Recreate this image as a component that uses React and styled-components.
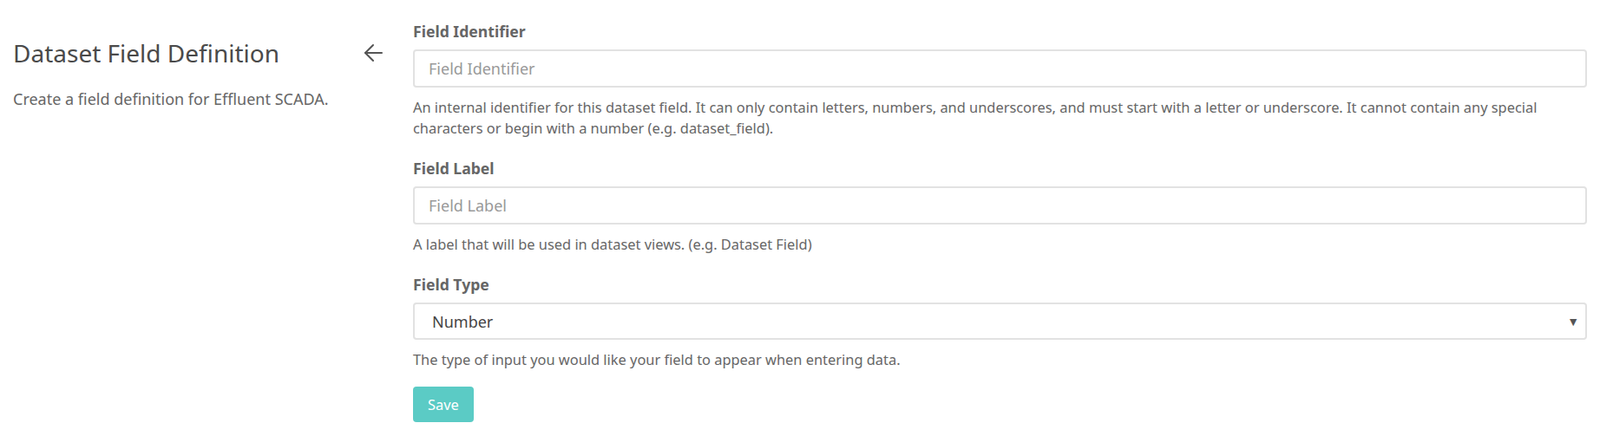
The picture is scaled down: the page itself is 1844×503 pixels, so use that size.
import React from "react";
import styled, { createGlobalStyle } from "styled-components";

const GlobalStyle = createGlobalStyle`
  html, body { margin: 0; padding: 0; background: #ffffff; }
  body { font-family: "Noto Sans", "Open Sans", sans-serif; color: #555; }
  * { box-sizing: border-box; }
`;

const Page = styled.div`
  display: flex;
  align-items: flex-start;
  padding: 24px 15px 0 15px;
  width: 1844px;
`;

const Sidebar = styled.aside`
  width: 426px;
  flex: 0 0 426px;
  padding-top: 19px;
`;

const SidebarHead = styled.div`
  display: flex;
  justify-content: space-between;
  align-items: center;
`;

const Title = styled.h1`
  margin: 0;
  font-size: 28px;
  line-height: 36px;
  font-weight: 400;
  color: #4a4a4a;
`;

const BackButton = styled.button`
  display: flex;
  align-items: center;
  justify-content: center;
  width: 22px;
  height: 22px;
  padding: 0;
  border: none;
  background: none;
  color: #555;
  cursor: pointer;
`;

const Subtitle = styled.p`
  margin: 23px 0 0 0;
  font-size: 18px;
  line-height: 24px;
  color: #666;
`;

const Form = styled.form`
  flex: 1;
  margin-left: 35px;
  display: flex;
  flex-direction: column;
  align-items: flex-start;
`;

const Group = styled.div`
  width: 100%;
  margin-bottom: ${(p) => p.$gap || 22}px;
`;

const Label = styled.label`
  display: block;
  font-size: 17.6px;
  line-height: 24px;
  font-weight: 700;
  color: #666;
  margin-bottom: 9px;
`;

const Input = styled.input`
  display: block;
  width: 100%;
  height: 44px;
  padding: 0 16px;
  border: 2px solid #e2e2e2;
  border-radius: 4px;
  font-family: inherit;
  font-size: 18px;
  color: #444;
  background: #fff;
  outline: none;
  &::placeholder { color: #999; }
`;

const SelectWrap = styled.div`
  position: relative;
  width: 100%;
`;

const Select = styled.select`
  display: block;
  width: 100%;
  height: 43px;
  padding: 0 40px 0 20px;
  border: 2px solid #e2e2e2;
  border-radius: 4px;
  font-family: inherit;
  font-size: 18px;
  color: #444;
  background: #fff;
  appearance: none;
  -webkit-appearance: none;
  outline: none;
`;

const Caret = styled.span`
  position: absolute;
  right: 9px;
  top: 50%;
  transform: translateY(-50%);
  font-size: 14px;
  line-height: 1;
  color: #555;
  pointer-events: none;
`;

const Help = styled.p`
  margin: 11px 0 0 0;
  font-size: 16.4px;
  line-height: 24px;
  color: #666;
`;

const SaveButton = styled.button`
  height: 41px;
  padding: 0 17px;
  border: none;
  border-radius: 4px;
  background: #5bcbc5;
  color: #fff;
  font-family: inherit;
  font-size: 16.4px;
  cursor: pointer;
`;

const ArrowLeft = () => (
  <svg width="22" height="22" viewBox="0 0 22 22" fill="none" stroke="currentColor" strokeWidth="2" strokeLinecap="round" strokeLinejoin="round">
    <path d="M21 11H2" />
    <path d="M11 2L2 11L11 20" />
  </svg>
);

export default function App() {
  return (
    <>
      <GlobalStyle />
      <Page>
        <Sidebar>
          <SidebarHead>
            <Title>Dataset Field Definition</Title>
            <BackButton type="button" aria-label="Back">
              <ArrowLeft />
            </BackButton>
          </SidebarHead>
          <Subtitle>Create a field definition for Effluent SCADA.</Subtitle>
        </Sidebar>
        <Form onSubmit={(e) => e.preventDefault()}>
          <Group>
            <Label htmlFor="fid">Field Identifier</Label>
            <Input id="fid" placeholder="Field Identifier" />
            <Help>
              An internal identifier for this dataset field. It can only contain letters, numbers, and underscores, and must start with a letter or underscore. It cannot contain any special characters or begin with a number (e.g. dataset_field).
            </Help>
          </Group>
          <Group>
            <Label htmlFor="flabel">Field Label</Label>
            <Input id="flabel" placeholder="Field Label" />
            <Help>A label that will be used in dataset views. (e.g. Dataset Field)</Help>
          </Group>
          <Group $gap={19}>
            <Label htmlFor="ftype">Field Type</Label>
            <SelectWrap>
              <Select id="ftype" defaultValue="number">
                <option value="number">Number</option>
                <option value="text">Text</option>
                <option value="date">Date</option>
              </Select>
              <Caret>▼</Caret>
            </SelectWrap>
            <Help>The type of input you would like your field to appear when entering data.</Help>
          </Group>
          <SaveButton type="submit">Save</SaveButton>
        </Form>
      </Page>
    </>
  );
}
